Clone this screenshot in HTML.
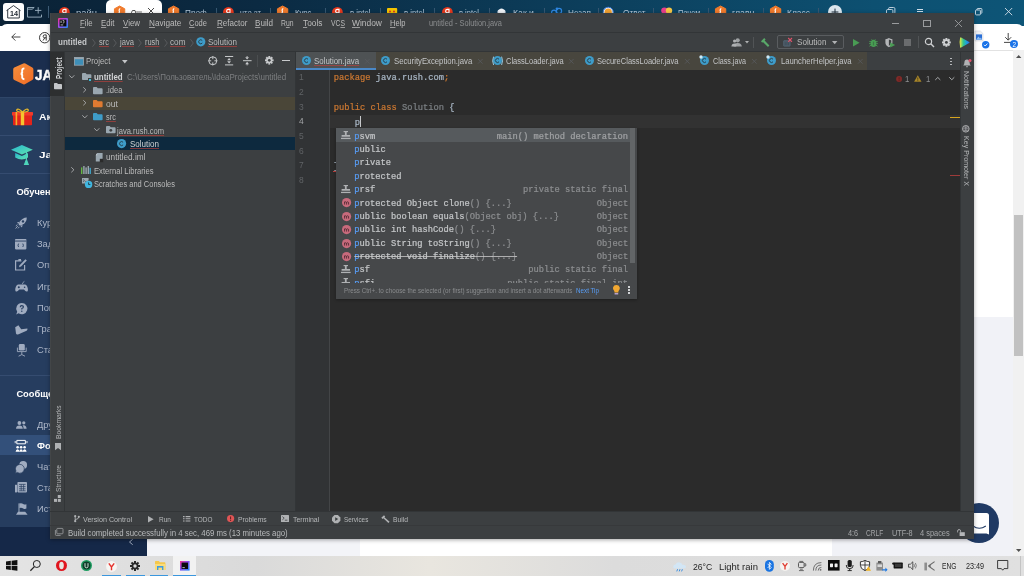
<!DOCTYPE html>
<html>
<head>
<meta charset="utf-8">
<title>untitled - Solution.java</title>
<style>
*{box-sizing:border-box;margin:0;padding:0}
html,body{width:1024px;height:576px;overflow:hidden;background:#fff}
body{position:relative;font-family:"Liberation Sans",sans-serif;font-size:9px;color:#bbb}
#root{position:absolute;left:0;top:0;width:1024px;height:576px;overflow:hidden;will-change:transform}
.abs{position:absolute}
.t{position:absolute;white-space:pre;line-height:1;transform-origin:0 50%;color:#bbbbbb}
.t u{text-decoration-thickness:.5px;text-underline-offset:.8px;text-decoration-color:rgba(187,187,187,.75)}
.m{font-family:"Liberation Mono",monospace;-webkit-text-stroke:.22px}
.s{font-family:"Liberation Serif",serif}
svg{position:absolute;overflow:visible}
.sq{text-decoration:underline;text-decoration-color:rgba(188,63,60,.65);text-decoration-thickness:0.6px;text-underline-offset:1.2px}
#bbar{left:0;top:0;width:1024px;height:26px;background:linear-gradient(100deg,#0b2236 0%,#0b2a42 25%,#0c3d5a 55%,#0d5071 85%,#0d5577 100%)}
#btool{left:0;top:24.4px;width:1024px;height:26.2px;background:#fff;border-radius:7px 7px 0 0}
#side{left:0;top:50.6px;width:226px;height:476.4px;background:#263d5f}
#sidetop{left:0;top:50.6px;width:226px;height:46.8px;background:#1b2e4e}
#sidebot{left:0;top:527px;width:147px;height:29px;background:#152848}
#pagel{left:147px;top:527px;width:213px;height:29px;background:#f3f4f8}
#pager{left:832.4px;top:317px;width:180.6px;height:239px;background:#f1f2f7}
#scroll{left:1013px;top:50px;width:11px;height:506px;background:#f1f1f1}
#thumb{left:1014px;top:215px;width:9px;height:141px;background:#c1c1c1}
#task{left:0;top:556px;width:1024px;height:20px;background:linear-gradient(90deg,#e4e4e4 0%,#dadada 25%,#e9e6df 42%,#dcdcdc 60%,#e0e0e0 100%)}
#ide{left:50px;top:13.4px;width:923.7px;height:525.4px;background:#3c3f41;box-shadow:0 1px 4px rgba(0,0,0,.35)}
</style>
</head>
<body>
<div id="root">
<div id="bbar" class="abs"></div>
<div id="btool" class="abs"></div>
<div id="side" class="abs"></div>
<div id="sidetop" class="abs"></div>
<div id="sidebot" class="abs"></div>
<div id="pagel" class="abs"></div>
<div id="pager" class="abs"></div>
<div id="scroll" class="abs"></div>
<div id="thumb" class="abs"></div>
<div id="task" class="abs"></div>
<!-- browser -->
<div class="abs" style="left:2.8px;top:2.8px;width:21.2px;height:18.4px;background:#fdfdfd;border-radius:3px"></div>
<svg style="left:6px;top:4.6px" width="15" height="13.6" viewBox="0 0 15 13.6" preserveAspectRatio="none"><path d="M.5 5.6L7.5 .6L14.5 5.6M1.7 4.9V13H13.3V4.9" stroke="#1d2630" stroke-width=".9" fill="none" stroke-linejoin="round"/></svg>
<span class="t" style="left:9.60px;top:10.00px;font-size:8px;color:#1d2630;font-weight:bold;transform:scaleX(0.899);">14</span>
<svg style="left:27px;top:7px" width="15" height="10.6" viewBox="0 0 15 10.6" preserveAspectRatio="none"><path d="M7.2 .5H.5V10.1H14.5V7.6" stroke="#9db2c3" stroke-width=".9" fill="none"/><path d="M11.2 .2V6.6M8 3.4H14.4" stroke="#9db2c3" stroke-width=".9"/><path d="M.5 2.2H5.2L7.2 .5" stroke="#9db2c3" stroke-width=".9" fill="none"/></svg>
<div class="abs" style="left:47.5px;top:6.2px;width:0.9px;height:11.4px;background:#3e5c76;"></div>
<div class="abs" style="left:106.3px;top:0px;width:55.9px;height:24px;background:#fff;border-radius:5px 5px 0 0"></div>
<div class="abs" style="left:215.7px;top:8px;width:0.8px;height:12px;background:#365670;"></div>
<div class="abs" style="left:270.2px;top:8px;width:0.8px;height:12px;background:#365670;"></div>
<div class="abs" style="left:324.7px;top:8px;width:0.8px;height:12px;background:#365670;"></div>
<div class="abs" style="left:379.7px;top:8px;width:0.8px;height:12px;background:#365670;"></div>
<div class="abs" style="left:434.2px;top:8px;width:0.8px;height:12px;background:#365670;"></div>
<div class="abs" style="left:489px;top:8px;width:0.8px;height:12px;background:#365670;"></div>
<div class="abs" style="left:543.5px;top:8px;width:0.8px;height:12px;background:#365670;"></div>
<div class="abs" style="left:598px;top:8px;width:0.8px;height:12px;background:#365670;"></div>
<div class="abs" style="left:653.2px;top:8px;width:0.8px;height:12px;background:#365670;"></div>
<div class="abs" style="left:708.2px;top:8px;width:0.8px;height:12px;background:#365670;"></div>
<div class="abs" style="left:762.8px;top:8px;width:0.8px;height:12px;background:#365670;"></div>
<div class="abs" style="left:817.5px;top:8px;width:0.8px;height:12px;background:#365670;"></div>
<svg style="left:59.00000000000001px;top:6.6px" width="10.8" height="10.8" viewBox="0 0 10.8 10.8" preserveAspectRatio="none"><circle cx="5.4" cy="5.4" r="5.4" fill="#e8391d"/><path d="M7.0 8.8V2.4000000000000004H5.4Q3.6000000000000005 2.4000000000000004 3.6000000000000005 4.2Q3.6000000000000005 5.800000000000001 5.800000000000001 5.800000000000001H7.0M5.6000000000000005 5.800000000000001L3.6000000000000005 8.8" stroke="#fff" stroke-width="1.1" fill="none"/></svg>
<span class="t" style="left:75.80px;top:8.00px;font-size:9.4px;color:#b4c6d6;transform:scaleX(1.010);">райн</span>
<svg style="left:113.9px;top:6.4px" width="11.2" height="11.2" viewBox="0 0 11.2 11.2" preserveAspectRatio="none"><path d="M5.6 0L10.751999999999999 2.8V8.399999999999999L5.6 11.2L0.4479999999999995 8.399999999999999V2.8Z" fill="#f07a2c" stroke="#f07a2c" stroke-width="1" stroke-linejoin="round"/><path d="M6.199999999999999 2.3999999999999995Q4.3999999999999995 3.8 5.5 5.6Q4.3999999999999995 7.3999999999999995 6.199999999999999 8.8" stroke="#fff" stroke-width="1.1" fill="none"/></svg>
<span class="t" style="left:131.30px;top:8.00px;font-size:9.4px;color:#222;transform:scaleX(0.734);">Ош</span>
<svg style="left:147.8px;top:8.4px" width="6" height="6" viewBox="0 0 6 6" preserveAspectRatio="none"><path d="M0 0L6 6M6 0L0 6" stroke="#333" stroke-width=".9"/></svg>
<svg style="left:168.3px;top:6.4px" width="11.2" height="11.2" viewBox="0 0 11.2 11.2" preserveAspectRatio="none"><path d="M5.6 0L10.751999999999999 2.8V8.399999999999999L5.6 11.2L0.4479999999999995 8.399999999999999V2.8Z" fill="#f07a2c" stroke="#f07a2c" stroke-width="1" stroke-linejoin="round"/><path d="M6.199999999999999 2.3999999999999995Q4.3999999999999995 3.8 5.5 5.6Q4.3999999999999995 7.3999999999999995 6.199999999999999 8.8" stroke="#fff" stroke-width="1.1" fill="none"/></svg>
<span class="t" style="left:185.20px;top:8.00px;font-size:9.4px;color:#b4c6d6;transform:scaleX(0.874);">Проф</span>
<svg style="left:223.1px;top:6.6px" width="10.8" height="10.8" viewBox="0 0 10.8 10.8" preserveAspectRatio="none"><circle cx="5.4" cy="5.4" r="5.4" fill="#e8391d"/><path d="M7.0 8.8V2.4000000000000004H5.4Q3.6000000000000005 2.4000000000000004 3.6000000000000005 4.2Q3.6000000000000005 5.800000000000001 5.800000000000001 5.800000000000001H7.0M5.6000000000000005 5.800000000000001L3.6000000000000005 8.8" stroke="#fff" stroke-width="1.1" fill="none"/></svg>
<span class="t" style="left:240.00px;top:8.00px;font-size:9.4px;color:#b4c6d6;transform:scaleX(0.813);">что эт</span>
<svg style="left:277.4px;top:6.4px" width="11.2" height="11.2" viewBox="0 0 11.2 11.2" preserveAspectRatio="none"><path d="M5.6 0L10.751999999999999 2.8V8.399999999999999L5.6 11.2L0.4479999999999995 8.399999999999999V2.8Z" fill="#f07a2c" stroke="#f07a2c" stroke-width="1" stroke-linejoin="round"/><path d="M6.199999999999999 2.3999999999999995Q4.3999999999999995 3.8 5.5 5.6Q4.3999999999999995 7.3999999999999995 6.199999999999999 8.8" stroke="#fff" stroke-width="1.1" fill="none"/></svg>
<span class="t" style="left:294.50px;top:8.00px;font-size:9.4px;color:#b4c6d6;transform:scaleX(0.825);">Курс</span>
<svg style="left:332.1px;top:6.6px" width="10.8" height="10.8" viewBox="0 0 10.8 10.8" preserveAspectRatio="none"><circle cx="5.4" cy="5.4" r="5.4" fill="#e8391d"/><path d="M7.0 8.8V2.4000000000000004H5.4Q3.6000000000000005 2.4000000000000004 3.6000000000000005 4.2Q3.6000000000000005 5.800000000000001 5.800000000000001 5.800000000000001H7.0M5.6000000000000005 5.800000000000001L3.6000000000000005 8.8" stroke="#fff" stroke-width="1.1" fill="none"/></svg>
<span class="t" style="left:349.50px;top:8.00px;font-size:9.4px;color:#b4c6d6;transform:scaleX(0.825);">в intel</span>
<svg style="left:387.2px;top:8.2px" width="10.2" height="8" viewBox="0 0 10.2 8" preserveAspectRatio="none"><rect width="10.2" height="8" rx="1" fill="#f4c400"/><circle cx="3" cy="3.4" r="1" fill="#d8322a"/><circle cx="7" cy="3.4" r="1" fill="#d8322a"/></svg>
<span class="t" style="left:403.50px;top:8.00px;font-size:9.4px;color:#b4c6d6;transform:scaleX(0.825);">в intel</span>
<svg style="left:441.90000000000003px;top:6.6px" width="10.8" height="10.8" viewBox="0 0 10.8 10.8" preserveAspectRatio="none"><circle cx="5.4" cy="5.4" r="5.4" fill="#e8391d"/><path d="M7.0 8.8V2.4000000000000004H5.4Q3.6000000000000005 2.4000000000000004 3.6000000000000005 4.2Q3.6000000000000005 5.800000000000001 5.800000000000001 5.800000000000001H7.0M5.6000000000000005 5.800000000000001L3.6000000000000005 8.8" stroke="#fff" stroke-width="1.1" fill="none"/></svg>
<span class="t" style="left:458.50px;top:8.00px;font-size:9.4px;color:#b4c6d6;transform:scaleX(0.805);">в intel</span>
<svg style="left:497.2px;top:8px" width="9" height="9" viewBox="0 0 9 9" preserveAspectRatio="none"><rect x=".5" y="1.5" width="8" height="7" rx="2" fill="#dfe6ee"/><circle cx="4.5" cy="3" r="2.6" fill="#eef2f6"/></svg>
<span class="t" style="left:513.00px;top:8.00px;font-size:9.4px;color:#b4c6d6;transform:scaleX(0.926);">Как и</span>
<svg style="left:551px;top:7.4px" width="11" height="9" viewBox="0 0 11 9" preserveAspectRatio="none"><circle cx="3" cy="5.6" r="2.4" stroke="#2e86e0" stroke-width="1.2" fill="none"/><circle cx="8" cy="4" r="2.6" stroke="#2e86e0" stroke-width="1.2" fill="none"/><circle cx="6" cy="1.8" r="1.4" fill="#2e86e0"/></svg>
<span class="t" style="left:568.00px;top:8.00px;font-size:9.4px;color:#b4c6d6;transform:scaleX(0.870);">Незап</span>
<svg style="left:603.3px;top:6.8px" width="10.4" height="10.4" viewBox="0 0 10.4 10.4" preserveAspectRatio="none"><circle cx="5.2" cy="5.2" r="5.2" fill="#f4f6f8"/><circle cx="5.2" cy="5.2" r="3.6" fill="#f0a030"/><circle cx="5.2" cy="5.2" r="5" stroke="#2e6fd0" stroke-width="1" fill="none"/></svg>
<span class="t" style="left:622.50px;top:8.00px;font-size:9.4px;color:#b4c6d6;transform:scaleX(0.875);">Ответ</span>
<svg style="left:660.6px;top:6.6px" width="11.6" height="9" viewBox="0 0 11.6 9" preserveAspectRatio="none"><circle cx="3.4" cy="3.6" r="3.2" fill="#e83e8c"/><circle cx="8" cy="3.6" r="3.2" fill="#f6c544"/></svg>
<span class="t" style="left:677.50px;top:8.00px;font-size:9.4px;color:#b4c6d6;transform:scaleX(0.793);">Почем</span>
<svg style="left:715.1999999999999px;top:6.4px" width="11.2" height="11.2" viewBox="0 0 11.2 11.2" preserveAspectRatio="none"><path d="M5.6 0L10.751999999999999 2.8V8.399999999999999L5.6 11.2L0.4479999999999995 8.399999999999999V2.8Z" fill="#f07a2c" stroke="#f07a2c" stroke-width="1" stroke-linejoin="round"/><path d="M6.199999999999999 2.3999999999999995Q4.3999999999999995 3.8 5.5 5.6Q4.3999999999999995 7.3999999999999995 6.199999999999999 8.8" stroke="#fff" stroke-width="1.1" fill="none"/></svg>
<span class="t" style="left:731.50px;top:8.00px;font-size:9.4px;color:#b4c6d6;transform:scaleX(0.933);">главн</span>
<svg style="left:770.1999999999999px;top:6.4px" width="11.2" height="11.2" viewBox="0 0 11.2 11.2" preserveAspectRatio="none"><path d="M5.6 0L10.751999999999999 2.8V8.399999999999999L5.6 11.2L0.4479999999999995 8.399999999999999V2.8Z" fill="#f07a2c" stroke="#f07a2c" stroke-width="1" stroke-linejoin="round"/><path d="M6.199999999999999 2.3999999999999995Q4.3999999999999995 3.8 5.5 5.6Q4.3999999999999995 7.3999999999999995 6.199999999999999 8.8" stroke="#fff" stroke-width="1.1" fill="none"/></svg>
<span class="t" style="left:786.50px;top:8.00px;font-size:9.4px;color:#b4c6d6;transform:scaleX(0.899);">Класс</span>
<svg style="left:828.3px;top:4.6px" width="14" height="14" viewBox="0 0 14 14" preserveAspectRatio="none"><circle cx="7" cy="7" r="7" fill="#dbe6ee"/><path d="M7 3.6V10.4M3.6 7H10.4" stroke="#1d2c3a" stroke-width="1"/></svg>
<svg style="left:886px;top:7px" width="9.4" height="9" viewBox="0 0 9.4 9" preserveAspectRatio="none"><rect x=".5" y="2.5" width="6.4" height="6" rx="1.2" stroke="#cfdde8" stroke-width=".9" fill="none"/><path d="M2.6 2.4V1.6Q2.6 .5 3.8 .5H7.6Q8.9 .5 8.9 1.7V5.4Q8.9 6.6 7.6 6.6" stroke="#cfdde8" stroke-width=".9" fill="none"/></svg>
<div class="abs" style="left:916.8px;top:9px;width:6.4px;height:0.9px;background:#cfdde8;"></div>
<div class="abs" style="left:916.8px;top:11.4px;width:6.4px;height:0.9px;background:#cfdde8;"></div>
<svg style="left:975.4px;top:8px" width="7.4" height="7.4" viewBox="0 0 7.4 7.4" preserveAspectRatio="none"><rect x=".5" y="2" width="4.9" height="4.9" rx=".8" stroke="#d4e0ea" stroke-width=".9" fill="none"/><path d="M2 2V1.2Q2 .5 2.8 .5H6.2Q6.9 .5 6.9 1.2V4.6Q6.9 5.4 6.2 5.4" stroke="#d4e0ea" stroke-width=".9" fill="none"/></svg>
<svg style="left:1004.8px;top:8.4px" width="7.2" height="7.2" viewBox="0 0 7.2 7.2" preserveAspectRatio="none"><path d="M0 0L7.2 7.2M7.2 0L0 7.2" stroke="#d4e0ea" stroke-width=".9"/></svg>
<svg style="left:11px;top:33.4px" width="9.4" height="8" viewBox="0 0 9.4 8" preserveAspectRatio="none"><path d="M9.4 4H.8M4.4 .4L.8 4L4.4 7.6" stroke="#333" stroke-width=".9" fill="none"/></svg>
<svg style="left:39.3px;top:31.8px" width="11.4" height="11.4" viewBox="0 0 11.4 11.4" preserveAspectRatio="none"><circle cx="5.7" cy="5.7" r="5.7" fill="#fff"/><circle cx="5.7" cy="5.7" r="5.2" stroke="#222" stroke-width=".9" fill="none"/><path d="M7.2 8.6V2.9H5.6Q4.2 2.9 4.2 4.4Q4.2 5.8 5.8 5.8H7.2M5.8 5.8L4 8.6" stroke="#222" stroke-width=".9" fill="none"/></svg>
<svg style="left:975.4px;top:31px" width="8" height="10" viewBox="0 0 8 10" preserveAspectRatio="none"><path d="M0 0H5.4L8 2.6V10H0Z" fill="#eef0f3" stroke="#c9ced6" stroke-width=".5"/><rect x="1" y="3.4" width="6" height="5.4" fill="#2a6fd6"/><path d="M1 8.8L3.4 5.6L5 7.4L6 6.4L7 8.8Z" fill="#8fc0f5"/></svg>
<svg style="left:981.5999999999999px;top:40.5px" width="7.4" height="7.4" viewBox="0 0 7.4 7.4" preserveAspectRatio="none"><circle cx="3.7" cy="3.7" r="3.7" fill="#1a73e8"/><path d="M2 3.8L3.2 5L5.4 2.6" stroke="#fff" stroke-width=".9" fill="none"/></svg>
<svg style="left:1003.8px;top:32.6px" width="8.4" height="10" viewBox="0 0 8.4 10" preserveAspectRatio="none"><path d="M4.2 0V7M1.2 4.2L4.2 7.2L7.2 4.2M0 9.4H8.4" stroke="#333" stroke-width=".9" fill="none"/></svg>
<svg style="left:1010.3px;top:40.2px" width="8" height="8" viewBox="0 0 8 8" preserveAspectRatio="none"><circle cx="4" cy="4" r="4" fill="#1a73e8"/></svg>
<span class="t" style="left:1012.60px;top:42.00px;font-size:6.4px;color:#fff;">2</span>
<div class="abs" style="left:974px;top:50.2px;width:39px;height:1.2px;background:#e2e2e2;"></div>
<svg style="left:1015.8px;top:55.4px" width="5.4" height="3" viewBox="0 0 5.4 3" preserveAspectRatio="none"><path d="M0 3L2.7 0L5.4 3Z" fill="#505050"/></svg>
<svg style="left:1015.6px;top:548.6px" width="5.4" height="3" viewBox="0 0 5.4 3" preserveAspectRatio="none"><path d="M0 0L2.7 3L5.4 0Z" fill="#505050"/></svg>
<svg style="left:959.4px;top:502.70000000000005px" width="40" height="40" viewBox="0 0 40 40" preserveAspectRatio="none"><circle cx="20" cy="20" r="20" fill="#203a64"/></svg>
<svg style="left:968.4px;top:512.7px" width="21" height="22" viewBox="0 0 21 22" preserveAspectRatio="none"><path d="M2 0H18.5Q21 0 21 2.5V21.6L18.4 20.5H2Q0 20.5 0 18.5V2Q0 0 2 0Z" fill="#fff"/><path d="M5 13Q11.3 17.6 17.8 13" stroke="#203a64" stroke-width="1.1" fill="none"/></svg>
<!-- sidebar -->
<div class="abs" style="left:0px;top:97.4px;width:50px;height:0.9px;background:#2f4668;"></div>
<div class="abs" style="left:0px;top:135px;width:50px;height:0.9px;background:#354c70;"></div>
<div class="abs" style="left:0px;top:172.8px;width:50px;height:0.9px;background:#354c70;"></div>
<div class="abs" style="left:0px;top:374.8px;width:50px;height:0.9px;background:#354c70;"></div>
<div class="abs" style="left:0px;top:435.2px;width:50px;height:20.2px;background:#33507a;"></div>
<svg style="left:12.6px;top:63.2px" width="20.6" height="21.6" viewBox="0 0 20.6 21.6" preserveAspectRatio="none"><defs><linearGradient id="lgo" x1="0" y1="0" x2="1" y2="1"><stop offset="0" stop-color="#f8913c"/><stop offset="1" stop-color="#ee6a26"/></linearGradient></defs><path d="M10.3 .4Q11.3 -.1 12.3 .5L19.3 4.6Q20.4 5.2 20.4 6.4V15.2Q20.4 16.4 19.3 17L12.3 21.1Q11.3 21.7 10.3 21.2L1.3 17Q.2 16.4 .2 15.2V6.4Q.2 5.2 1.3 4.6Z" fill="url(#lgo)"/><path d="M11.4 5.4Q8.8 5.6 9.2 8.2Q9.6 10.4 7.8 10.8Q9.6 11.2 9.2 13.4Q8.8 16 11.4 16.2" stroke="#fff" stroke-width="1.9" fill="none"/></svg>
<span class="t" style="left:34.60px;top:67.00px;font-size:15.5px;color:#fff;font-weight:bold;transform:scaleX(0.858);-webkit-text-stroke:.5px #fff;">JA</span>
<svg style="left:11.8px;top:108.3px" width="21" height="17.6" viewBox="0 0 21 17.6" preserveAspectRatio="none"><rect x="1" y="5.6" width="19" height="11.6" rx=".8" fill="#e3241b"/><rect x="0" y="4" width="21" height="3.6" rx=".6" fill="#f03a2a"/><rect x="8.8" y="4" width="3.4" height="13.2" fill="#f6c52f"/><rect x="3.6" y="4" width="1.6" height="13.2" fill="#f6c52f" opacity=".85"/><path d="M10.5 4Q6 -.5 4.6 2Q4.2 3.8 10.5 4ZM10.5 4Q15 -.5 16.4 2Q16.8 3.8 10.5 4Z" fill="none" stroke="#e9b82a" stroke-width="1.1"/></svg>
<span class="t" style="left:39.30px;top:112.00px;font-size:9.8px;color:#fff;font-weight:bold;transform:scaleX(1.060);">Ак</span>
<svg style="left:10.8px;top:144.6px" width="21.8" height="19.6" viewBox="0 0 21.8 19.6" preserveAspectRatio="none"><defs><linearGradient id="lgc" x1="0" y1="0" x2="1" y2="1"><stop offset="0" stop-color="#27b9cf"/><stop offset="1" stop-color="#62e3ae"/></linearGradient></defs><path d="M10.9 0L21.8 4.8L10.9 9.6L0 4.8Z" fill="url(#lgc)"/><path d="M4.2 8V12.4Q10.9 16.4 17 12.4V8L10.9 10.9Z" fill="url(#lgc)"/><path d="M15.4 6.4V14M13.6 19.4L15.4 14.6L17.2 19.4Z" stroke="#4fd6bb" stroke-width="1.2" fill="#4fd6bb"/></svg>
<span class="t" style="left:38.90px;top:150.00px;font-size:9.8px;color:#fff;font-weight:bold;transform:scaleX(1.202);">Ja</span>
<span class="t" style="left:16.40px;top:188.00px;font-size:9.3px;color:#fff;font-weight:bold;">Обучение</span>
<span class="t" style="left:37.00px;top:219.00px;font-size:9.3px;color:#adb7c9;">Курсы</span>
<span class="t" style="left:37.00px;top:240.00px;font-size:9.3px;color:#adb7c9;">Задачи</span>
<span class="t" style="left:37.00px;top:261.00px;font-size:9.3px;color:#adb7c9;">Опросы</span>
<span class="t" style="left:37.00px;top:283.00px;font-size:9.3px;color:#adb7c9;">Игры</span>
<span class="t" style="left:37.00px;top:304.00px;font-size:9.3px;color:#adb7c9;">Помощь</span>
<span class="t" style="left:37.00px;top:325.00px;font-size:9.3px;color:#adb7c9;">График</span>
<span class="t" style="left:37.00px;top:346.00px;font-size:9.3px;color:#adb7c9;">Стажировка</span>
<svg style="left:15.2px;top:216.7px" width="12.2" height="12.2" viewBox="0 0 12.2 12.2" preserveAspectRatio="none"><path d="M11.8 .4Q7.4 .6 4.8 4.6L3.6 7.4L5 8.8L7.8 7.6Q11.8 5 11.8 .4Z" fill="#a0acc0"/><circle cx="8" cy="4.4" r="1.2" fill="#263d5f"/><path d="M3 8.8L.6 11.6M4.4 9.8L3 11.4M2.4 7.6L.8 9" stroke="#a0acc0" stroke-width=".9"/><path d="M4.6 4.8L2 5.4L3.4 7M7.6 7.8L7 10.4L5.4 9" fill="#a0acc0"/></svg>
<svg style="left:15.2px;top:238.5px" width="11.4" height="10.4" viewBox="0 0 11.4 10.4" preserveAspectRatio="none"><rect width="11.4" height="10.4" rx=".8" fill="#a0acc0"/><rect x="0" y="1.6" width="11.4" height=".9" fill="#263d5f"/><path d="M3.6 4.6Q2.4 6.3 3.6 8M7.8 4.6Q9 6.3 7.8 8" stroke="#263d5f" stroke-width=".9" fill="none"/></svg>
<svg style="left:15.2px;top:259.2px" width="12" height="11.6" viewBox="0 0 12 11.6" preserveAspectRatio="none"><path d="M6.4 1.8H.6V11H9.6V6" stroke="#a0acc0" stroke-width="1.2" fill="none"/><path d="M10.4 .2L11.8 1.6L6 7.6L4 8.2L4.6 6.2Z" fill="#a0acc0"/><rect x="3.4" y="0" width="2.6" height="1.8" fill="#a0acc0"/></svg>
<svg style="left:14.6px;top:281.2px" width="13.2" height="10.6" viewBox="0 0 13.2 10.6" preserveAspectRatio="none"><path d="M3.4 3.4H9.8Q12 3.4 12.8 7.2Q13.4 10.6 11.6 10.6Q10.4 10.6 9 8.6H4.2Q2.8 10.6 1.6 10.6Q-.2 10.6 .4 7.2Q1.2 3.4 3.4 3.4Z" fill="#a0acc0"/><path d="M7.4 3.2Q7.4 1.4 9.4 .4" stroke="#a0acc0" stroke-width=".8" fill="none"/><circle cx="3.8" cy="6.2" r="1" fill="#263d5f"/><circle cx="9.6" cy="6.2" r=".8" fill="#263d5f"/></svg>
<svg style="left:15.6px;top:302.6px" width="11.6" height="11.6" viewBox="0 0 11.6 11.6" preserveAspectRatio="none"><path d="M5.8 0A5.6 5.6 0 1 1 2.6 10.2L.2 11.4L1.2 8.8A5.6 5.6 0 0 1 5.8 0Z" fill="#a0acc0"/><path d="M4.2 4.2Q4.2 2.6 5.8 2.6Q7.4 2.6 7.4 4Q7.4 5 5.8 5.6V6.6" stroke="#263d5f" stroke-width="1.1" fill="none"/><circle cx="5.8" cy="8.2" r=".7" fill="#263d5f"/></svg>
<svg style="left:14.8px;top:324.6px" width="12.8" height="9.6" viewBox="0 0 12.8 9.6" preserveAspectRatio="none"><path d="M.2 2.2L3.4 .2L6.2 4.2L12.4 3.6Q12.8 5 11.6 5.8L3 9.4Q1.4 9.8 1 8.4Z" fill="#a0acc0"/></svg>
<svg style="left:16.6px;top:344.4px" width="9.6" height="12.6" viewBox="0 0 9.6 12.6" preserveAspectRatio="none"><rect x="1.8" y="0" width="6" height="6.6" rx="1.4" fill="#a0acc0"/><path d="M.4 3.6V7.6H9.2V3.6" stroke="#a0acc0" stroke-width=".9" fill="none"/><path d="M4.8 7.8V10.6M1.6 12.2L4.8 10.6L8 12.2" stroke="#a0acc0" stroke-width=".9" fill="none"/></svg>
<span class="t" style="left:16.40px;top:390.00px;font-size:9.3px;color:#fff;font-weight:bold;">Сообщество</span>
<span class="t" style="left:37.00px;top:421.00px;font-size:9.3px;color:#adb7c9;">Друзья</span>
<span class="t" style="left:37.00px;top:442.00px;font-size:9.3px;color:#fff;font-weight:bold;">Форум</span>
<span class="t" style="left:37.00px;top:463.00px;font-size:9.3px;color:#adb7c9;">Чат</span>
<span class="t" style="left:37.00px;top:484.00px;font-size:9.3px;color:#adb7c9;">Статьи</span>
<span class="t" style="left:37.00px;top:505.00px;font-size:9.3px;color:#adb7c9;">Истории</span>
<svg style="left:16px;top:420.5px" width="10.6" height="7.8" viewBox="0 0 10.6 7.8" preserveAspectRatio="none"><circle cx="3.4" cy="2" r="1.9" fill="#a0acc0"/><path d="M0 7.8Q.2 4.6 3.4 4.6Q6.6 4.6 6.8 7.8Z" fill="#a0acc0"/><circle cx="7.8" cy="1.8" r="1.6" fill="#a0acc0"/><path d="M7 4.2Q10.4 3.8 10.6 7.8H7.6Q7.6 5.6 6.6 4.6Z" fill="#a0acc0"/></svg>
<svg style="left:15.3px;top:439.5px" width="12.2" height="12" viewBox="0 0 12.2 12" preserveAspectRatio="none"><path d="M1.8 .4H10.4V3.8H1.8Z" stroke="#fff" stroke-width="1" fill="none"/><path d="M.2 1V3.2M12 1V3.2" stroke="#fff" stroke-width=".9"/><circle cx="2.6" cy="7.2" r="1.3" fill="#fff"/><circle cx="6.1" cy="7.2" r="1.3" fill="#fff"/><circle cx="9.6" cy="7.2" r="1.3" fill="#fff"/><path d="M.6 11.8Q.8 9.2 2.6 9.2Q4.3 9.2 4.4 11.8ZM4.3 11.8Q4.4 9.2 6.1 9.2Q7.8 9.2 7.9 11.8ZM7.8 11.8Q7.9 9.2 9.6 9.2Q11.4 9.2 11.6 11.8Z" fill="#fff"/></svg>
<svg style="left:15.2px;top:460.5px" width="12.4" height="12.4" viewBox="0 0 12.4 12.4" preserveAspectRatio="none"><circle cx="8.2" cy="4" r="3.9" fill="#a0acc0"/><path d="M4.6 3.4A4.4 4.4 0 1 1 2.4 11.4L.2 12.2L1 10A4.4 4.4 0 0 1 4.6 3.4Z" fill="#a0acc0" stroke="#263d5f" stroke-width=".7"/></svg>
<svg style="left:15.4px;top:482.4px" width="12" height="10.4" viewBox="0 0 12 10.4" preserveAspectRatio="none"><rect x="2.4" y="0" width="9.6" height="10.4" rx=".8" fill="#a0acc0"/><rect x="0" y="2.8" width="2" height="7.6" fill="#a0acc0"/><path d="M4 2.4H10.6M4 4.6H10.6M4 6.8H10.6M4 8.8H10.6M6.2 2.4V8.8M8.6 2.4V8.8" stroke="#263d5f" stroke-width=".7"/></svg>
<svg style="left:15.6px;top:503.4px" width="11.6" height="12" viewBox="0 0 11.6 12" preserveAspectRatio="none"><path d="M3 .4V9" stroke="#a0acc0" stroke-width="1"/><path d="M3.4 .6Q5.4 -.2 7.2 1Q8.8 2 10.4 1.2V5.6Q8.8 6.4 7.2 5.4Q5.4 4.2 3.4 5Z" fill="#a0acc0"/><path d="M0 11.8L2 8.8H9.2L11.6 11.8Z" fill="#a0acc0"/></svg>
<svg style="left:129px;top:539px" width="4" height="6" viewBox="0 0 4 6" preserveAspectRatio="none"><path d="M3.7 .3L.5 3L3.7 5.7" stroke="#aab4c6" stroke-width=".9" fill="none"/></svg>
<!-- taskbar -->
<div class="abs" style="left:172.9px;top:556px;width:23.4px;height:20px;background:#f2f2f2;"></div>
<svg style="left:5.9px;top:560.4px" width="11.4" height="10.8" viewBox="0 0 11.4 10.8" preserveAspectRatio="none"><path d="M0 1.5L4.8 .8V5H0ZM5.6 .7L11.4 0V5H5.6ZM0 5.8H4.8V10L0 9.3ZM5.6 5.8H11.4V10.8L5.6 10.1Z" fill="#111"/></svg>
<svg style="left:30.4px;top:560.2px" width="11" height="11.2" viewBox="0 0 11 11.2" preserveAspectRatio="none"><circle cx="6.8" cy="4" r="3.5" stroke="#222" stroke-width="1" fill="none"/><path d="M4.4 6.6L.4 10.8" stroke="#222" stroke-width="1.2"/></svg>
<svg style="left:56.4px;top:560.4px" width="11" height="11" viewBox="0 0 11 11" preserveAspectRatio="none"><circle cx="5.5" cy="5.5" r="5.5" fill="#e0161f"/><ellipse cx="5.5" cy="5.5" rx="2.3" ry="3.7" fill="#e8e6e2"/></svg>
<svg style="left:81px;top:560.4px" width="11" height="11" viewBox="0 0 11 11" preserveAspectRatio="none"><circle cx="5.5" cy="5.5" r="5.5" fill="#1f9e62"/><circle cx="5.5" cy="5.5" r="4" fill="#0e3f2a"/><path d="M4 3.2V6.4Q4 7.8 5.5 7.8Q7 7.8 7 6.4V3.2" stroke="#e8f4ec" stroke-width=".9" fill="none"/></svg>
<svg style="left:105.6px;top:560.6px" width="11" height="11" viewBox="0 0 11 11" preserveAspectRatio="none"><circle cx="5.5" cy="5.5" r="5.4" fill="#f7f5f2"/><path d="M2.8 2.4L5.5 6L8.2 2.4M5.5 6V9.2" stroke="#e5322d" stroke-width="1.4" fill="none"/></svg>
<svg style="left:130.2px;top:560.9px" width="10" height="10" viewBox="0 0 10 10" preserveAspectRatio="none"><g transform="translate(5,5)"><rect x="-1" y="-5" width="2" height="2.4" transform="rotate(0)" fill="#2a2a2a"/><rect x="-1" y="-5" width="2" height="2.4" transform="rotate(45)" fill="#2a2a2a"/><rect x="-1" y="-5" width="2" height="2.4" transform="rotate(90)" fill="#2a2a2a"/><rect x="-1" y="-5" width="2" height="2.4" transform="rotate(135)" fill="#2a2a2a"/><rect x="-1" y="-5" width="2" height="2.4" transform="rotate(180)" fill="#2a2a2a"/><rect x="-1" y="-5" width="2" height="2.4" transform="rotate(225)" fill="#2a2a2a"/><rect x="-1" y="-5" width="2" height="2.4" transform="rotate(270)" fill="#2a2a2a"/><rect x="-1" y="-5" width="2" height="2.4" transform="rotate(315)" fill="#2a2a2a"/><circle r="3.4" fill="#2a2a2a"/><circle r="1.7" fill="#dcdcdc"/></g></svg>
<svg style="left:155.3px;top:561.4px" width="10.4" height="9" viewBox="0 0 10.4 9" preserveAspectRatio="none"><path d="M0 .6Q0 0 .6 0H3.8L5 1.2H9.8Q10.4 1.2 10.4 1.8V9H0Z" fill="#f5c84c"/><rect x="0" y="3" width="10.4" height="6" fill="#f9dc7c"/><rect x="2" y="5" width="6.4" height="4" fill="#3f9be0"/><rect x="3.4" y="6.6" width="3.6" height="2.4" fill="#f9dc7c"/></svg>
<svg style="left:180px;top:561px" width="9.6" height="9.6" viewBox="0 0 9.6 9.6" preserveAspectRatio="none"><defs><linearGradient id="lg3" x1="0" y1="0" x2="1" y2="1"><stop offset="0" stop-color="#fc318c"/><stop offset=".45" stop-color="#8a4df0"/><stop offset="1" stop-color="#1f8bf5"/></linearGradient></defs><rect width="9.6" height="9.6" fill="url(#lg3)"/><rect x="1.6" y="1.6" width="6.4" height="6.4" fill="#0b0b0d"/><rect x="2.4" y="6.4" width="2.4" height=".7" fill="#fff"/></svg>
<div class="abs" style="left:102px;top:574.6px;width:18.700000000000003px;height:1.4px;background:#3a96dd;"></div>
<div class="abs" style="left:126px;top:574.6px;width:19px;height:1.4px;background:#3a96dd;"></div>
<div class="abs" style="left:150.4px;top:574.6px;width:17.599999999999994px;height:1.4px;background:#3a96dd;"></div>
<div class="abs" style="left:172.9px;top:574.6px;width:23.400000000000006px;height:1.4px;background:#3a96dd;"></div>
<svg style="left:672.8px;top:561.7px" width="13.2" height="9.6" viewBox="0 0 13.2 9.6" preserveAspectRatio="none"><path d="M3 6.6Q.2 6.6 .2 4.4Q.2 2.4 2.6 2.4Q3.4 .2 6 .2Q8.8 .2 9.4 2.8Q13 2.6 13 5Q13 6.6 10.6 6.6Z" fill="#d3e6f5"/><path d="M4.6 7.2L3.8 9.4M7 7.2L6.2 9.4M9.4 7.2L8.6 9.4" stroke="#3a8fe0" stroke-width="1"/></svg>
<span class="t" style="left:693.00px;top:562.00px;font-size:9.5px;color:#262626;transform:scaleX(0.909);">26°C</span>
<span class="t" style="left:718.80px;top:562.00px;font-size:9.5px;color:#262626;transform:scaleX(0.995);">Light rain</span>
<svg style="left:765.1px;top:559.9px" width="8.8" height="11.8" viewBox="0 0 8.8 11.8" preserveAspectRatio="none"><rect width="8.8" height="11.8" rx="4.2" fill="#1a74e2"/><path d="M2.6 3.8L6.2 7.6L4.4 9.4V2.4L6.2 4.2L2.6 8" stroke="#fff" stroke-width=".8" fill="none"/></svg>
<svg style="left:780.3px;top:561.4px" width="10" height="10" viewBox="0 0 10 10" preserveAspectRatio="none"><circle cx="5" cy="5" r="5" fill="#f6f4f1"/><path d="M2.6 2.2L5 5.4L7.4 2.2M5 5.4V8.4" stroke="#e03a2f" stroke-width="1.3" fill="none"/></svg>
<svg style="left:798px;top:561px" width="8.4" height="10" viewBox="0 0 8.4 10" preserveAspectRatio="none"><rect x=".5" y="1.4" width="5.6" height="5.2" rx="1" stroke="#4a4a4a" stroke-width=".9" fill="none"/><path d="M6.2 2.8H7.8V5H6.2M1.4 .4H5.2M2 8.2H4.8M1 9.6H5.8" stroke="#4a4a4a" stroke-width=".8" fill="none"/></svg>
<svg style="left:813.4px;top:561.6px" width="8.8" height="9" viewBox="0 0 8.8 9" preserveAspectRatio="none"><path d="M.4 8.6Q.4 .6 8.4 .6M2.8 8.6Q2.8 3 8.4 3M5.2 8.6Q5.2 5.4 8.4 5.4" stroke="#6e6e6e" stroke-width="1" fill="none"/><circle cx="7.6" cy="7.8" r=".9" fill="#6e6e6e"/></svg>
<svg style="left:827.8px;top:560.4px" width="11.6" height="10.6" viewBox="0 0 11.6 10.6" preserveAspectRatio="none"><rect width="11.6" height="10.6" fill="#0c0c0c"/><rect x="2" y="3.4" width="3" height="3.8" rx=".6" fill="#f0f0f0"/><rect x="6.6" y="3.4" width="3" height="3.8" rx=".6" fill="#f0f0f0"/></svg>
<svg style="left:845.8px;top:560.2px" width="7.4" height="11" viewBox="0 0 7.4 11" preserveAspectRatio="none"><rect x="1.6" y="0" width="4.2" height="7" rx="1.6" fill="#1a1a1a"/><path d="M.4 5V6Q.4 8.6 3.7 8.6Q7 8.6 7 6V5M3.7 8.6V10.4M1.6 10.6H5.8" stroke="#1a1a1a" stroke-width=".9" fill="none"/></svg>
<svg style="left:859.8px;top:560.4px" width="11" height="11" viewBox="0 0 11 11" preserveAspectRatio="none"><path d="M5 .4Q7.2 1.8 9.6 1.8V5.4Q9.6 8.8 5 10.6Q.4 8.8 .4 5.4V1.8Q2.8 1.8 5 .4Z" fill="#fafafa" stroke="#222" stroke-width=".9"/><path d="M5 .8V10.2M.6 5H9.4" stroke="#222" stroke-width=".8"/><path d="M8.4 6.2L11 10.8H5.8Z" fill="#f2b320"/></svg>
<svg style="left:875.6px;top:560.6px" width="11.6" height="10.6" viewBox="0 0 11.6 10.6" preserveAspectRatio="none"><rect x=".4" y="1.6" width="6.6" height="8" fill="#8c8c8c"/><rect x="2" y="0" width="3.4" height="2.2" fill="#5a5a5a"/><rect x="1.4" y="3.4" width="4.6" height="2.6" fill="#d8d8d8"/><path d="M6.2 8.2H9.4V6.6L11.6 8.8L9.4 11V9.6H6.2Z" fill="#1f78e0"/></svg>
<svg style="left:892.3px;top:562.4px" width="10.8" height="7" viewBox="0 0 10.8 7" preserveAspectRatio="none"><rect x="1.6" y=".6" width="9.2" height="5.8" rx=".6" fill="#141414"/><circle cx="1.4" cy="1.6" r="1.2" fill="#141414"/><rect x="3" y="1.8" width="6.4" height="3.2" fill="#3a3a3a"/></svg>
<svg style="left:908.2px;top:561.4px" width="9.8" height="9.4" viewBox="0 0 9.8 9.4" preserveAspectRatio="none"><path d="M.5 3.2H2.4L4.8 .8V8.6L2.4 6.2H.5Z" stroke="#333" stroke-width=".8" fill="none"/><path d="M6 3.2Q7 4.7 6 6.2M7.4 2Q9.2 4.7 7.4 7.4" stroke="#555" stroke-width=".7" fill="none"/></svg>
<svg style="left:924px;top:561.2px" width="11.6" height="9.8" viewBox="0 0 11.6 9.8" preserveAspectRatio="none"><rect x=".4" y="1.6" width="2.6" height="7.8" fill="#8e8e8e"/><path d="M4.4 5L10.6 .6M4.4 5L10.6 9.4M4.4 5H7" stroke="#6a6a6a" stroke-width="1.1" fill="none"/></svg>
<span class="t" style="left:942.10px;top:562.00px;font-size:8.6px;color:#262626;transform:scaleX(0.773);">ENG</span>
<span class="t" style="left:966.20px;top:562.00px;font-size:8.6px;color:#262626;transform:scaleX(0.841);">23:49</span>
<svg style="left:997px;top:559.9px" width="11.4" height="10.8" viewBox="0 0 11.4 10.8" preserveAspectRatio="none"><path d="M.6 .5H10.8V8.6H7L5.7 10.2L4.4 8.6H.6Z" stroke="#2a2a2a" stroke-width=".9" fill="none"/></svg>
<div class="abs" style="left:1019.8px;top:556px;width:0.7px;height:20px;background:#c4c4c4;"></div>
<div id="ide" class="abs"></div>
<!-- ide_top -->
<svg style="left:58px;top:18px" width="10" height="10" viewBox="0 0 10 10" preserveAspectRatio="none"><defs><linearGradient id="lg1" x1="0" y1="0" x2="1" y2="1"><stop offset="0" stop-color="#fc318c"/><stop offset=".45" stop-color="#a44df0"/><stop offset="1" stop-color="#1f8bf5"/></linearGradient></defs><rect width="10" height="10" rx="1" fill="url(#lg1)"/><rect x="1.6" y="1.6" width="6.8" height="6.8" fill="#0b0b0d"/><rect x="2.6" y="6.6" width="2.6" height=".7" fill="#fff"/><rect x="2.7" y="2.6" width=".7" height="2.4" fill="#fff"/><path d="M4.6 2.6h1.4v1.8q0 .6-.7.6h-.6" stroke="#fff" stroke-width=".6" fill="none"/></svg>
<span class="t" style="left:80.00px;top:19.00px;font-size:8.9px;transform:scaleX(0.872);"><u>F</u>ile</span>
<span class="t" style="left:101.00px;top:19.00px;font-size:8.9px;transform:scaleX(0.880);"><u>E</u>dit</span>
<span class="t" style="left:122.50px;top:19.00px;font-size:8.9px;transform:scaleX(0.889);"><u>V</u>iew</span>
<span class="t" style="left:149.00px;top:19.00px;font-size:8.9px;transform:scaleX(0.925);"><u>N</u>avigate</span>
<span class="t" style="left:189.00px;top:19.00px;font-size:8.9px;transform:scaleX(0.846);"><u>C</u>ode</span>
<span class="t" style="left:216.50px;top:19.00px;font-size:8.9px;transform:scaleX(0.907);"><u>R</u>efactor</span>
<span class="t" style="left:255.00px;top:19.00px;font-size:8.9px;transform:scaleX(0.910);"><u>B</u>uild</span>
<span class="t" style="left:281.00px;top:19.00px;font-size:8.9px;transform:scaleX(0.766);">R<u>u</u>n</span>
<span class="t" style="left:302.50px;top:19.00px;font-size:8.9px;transform:scaleX(0.939);"><u>T</u>ools</span>
<span class="t" style="left:330.50px;top:19.00px;font-size:8.9px;transform:scaleX(0.765);">VC<u>S</u></span>
<span class="t" style="left:352.00px;top:19.00px;font-size:8.9px;transform:scaleX(0.948);"><u>W</u>indow</span>
<span class="t" style="left:390.00px;top:19.00px;font-size:8.9px;transform:scaleX(0.847);"><u>H</u>elp</span>
<span class="t" style="left:428.50px;top:19.00px;font-size:8.9px;color:#8b8d8f;transform:scaleX(0.834);">untitled - Solution.java</span>
<div class="abs" style="left:891.7px;top:23px;width:7.4px;height:0.9px;background:#9a9c9e;"></div>
<div class="abs" style="left:923.4px;top:19.5px;width:7.2px;height:7.2px;background:transparent;border:1px solid #9a9c9e"></div>
<svg style="left:955px;top:19.5px" width="7" height="7" viewBox="0 0 7 7" preserveAspectRatio="none"><path d="M0 0L7 7M7 0L0 7" stroke="#9a9c9e" stroke-width=".9"/></svg>
<div class="abs" style="left:50px;top:32px;width:924px;height:1px;background:#323537;"></div>
<span class="t" style="left:58.00px;top:38.00px;font-size:8.9px;color:#c4c6c8;font-weight:bold;transform:scaleX(0.903);">untitled</span>
<span class="t" style="left:98.50px;top:38.00px;font-size:8.9px;transform:scaleX(0.843);"><span class="sq">src</span></span>
<span class="t" style="left:119.50px;top:38.00px;font-size:8.9px;transform:scaleX(0.857);"><span class="sq">java</span></span>
<span class="t" style="left:145.00px;top:38.00px;font-size:8.9px;transform:scaleX(0.838);"><span class="sq">rush</span></span>
<span class="t" style="left:170.00px;top:38.00px;font-size:8.9px;transform:scaleX(0.922);"><span class="sq">com</span></span>
<svg style="left:91.5px;top:38.5px" width="4" height="8" viewBox="0 0 4 8" preserveAspectRatio="none"><path d="M.5 .3L3.3 4L.5 7.7" stroke="#5e6163" stroke-width=".8" fill="none"/></svg>
<svg style="left:112.5px;top:38.5px" width="4" height="8" viewBox="0 0 4 8" preserveAspectRatio="none"><path d="M.5 .3L3.3 4L.5 7.7" stroke="#5e6163" stroke-width=".8" fill="none"/></svg>
<svg style="left:138px;top:38.5px" width="4" height="8" viewBox="0 0 4 8" preserveAspectRatio="none"><path d="M.5 .3L3.3 4L.5 7.7" stroke="#5e6163" stroke-width=".8" fill="none"/></svg>
<svg style="left:163.5px;top:38.5px" width="4" height="8" viewBox="0 0 4 8" preserveAspectRatio="none"><path d="M.5 .3L3.3 4L.5 7.7" stroke="#5e6163" stroke-width=".8" fill="none"/></svg>
<svg style="left:190px;top:38.5px" width="4" height="8" viewBox="0 0 4 8" preserveAspectRatio="none"><path d="M.5 .3L3.3 4L.5 7.7" stroke="#5e6163" stroke-width=".8" fill="none"/></svg>
<svg style="left:195.5px;top:37.2px" width="9.6" height="9.6" viewBox="0 0 9.6 9.6" preserveAspectRatio="none"><circle cx="4.8" cy="4.8" r="4.6" fill="#3e9cc9"/><path d="M6.3 3.6A2 2 0 1 0 6.3 6" stroke="#27424f" stroke-width="1" fill="none"/></svg>
<span class="t" style="left:208.00px;top:38.00px;font-size:8.9px;transform:scaleX(0.902);"><span class="sq">Solution</span></span>
<svg style="left:731px;top:37.5px" width="12" height="9" viewBox="0 0 12 9" preserveAspectRatio="none"><circle cx="6.7" cy="2.3" r="2.1" fill="#9fa2a4"/><path d="M2.6 8.6Q2.8 5 6.7 5Q10.6 5 10.8 8.6Z" fill="#9fa2a4"/><circle cx="3.6" cy="3" r="1.6" fill="#afb1b3"/><path d="M.4 8.6Q.6 5.6 3.6 5.6Q5 5.6 5.6 6.4L5.2 8.6Z" fill="#afb1b3"/></svg>
<svg style="left:744.5px;top:41.2px" width="4" height="2.4" viewBox="0 0 4 2.4" preserveAspectRatio="none"><path d="M0 0H4L2 2.4Z" fill="#afb1b3"/></svg>
<div class="abs" style="left:753.3px;top:36.5px;width:0.8px;height:11.5px;background:#515456;"></div>
<svg style="left:758.5px;top:36.5px" width="11" height="11" viewBox="0 0 11 11" preserveAspectRatio="none"><path d="M2 4.2L5.2 1L6.6 2.4L5.6 3.4L10.4 8.6L9 10L3.9 5.1L3.2 5.7Z" fill="#59a869"/></svg>
<div class="abs" style="left:777.2px;top:34.8px;width:66.6px;height:14.6px;background:transparent;border:1px solid #5a5d60;border-radius:2px"></div>
<svg style="left:783px;top:37.5px" width="9" height="9" viewBox="0 0 9 9" preserveAspectRatio="none"><rect x=".6" y="2.6" width="6.6" height="5.6" rx=".6" fill="#4b5a66" stroke="#5c7080" stroke-width=".5"/><path d="M2.3 4.2v3M3.9 4.2v3M5.5 4.2v3" stroke="#3c4a55" stroke-width=".6"/><path d="M5.2 0L9 3.8M9 0L5.2 3.8" stroke="#e0526a" stroke-width="1.1"/></svg>
<span class="t" style="left:796.50px;top:38.00px;font-size:8.9px;transform:scaleX(0.917);">Solution</span>
<svg style="left:831.5px;top:40.8px" width="5.4" height="3.2" viewBox="0 0 5.4 3.2" preserveAspectRatio="none"><path d="M0 0H5.4L2.7 3.2Z" fill="#afb1b3"/></svg>
<svg style="left:852.8px;top:38.6px" width="6.6" height="7.6" viewBox="0 0 6.6 7.6" preserveAspectRatio="none"><path d="M0 0L6.6 3.8L0 7.6Z" fill="#499c54"/></svg>
<svg style="left:868.5px;top:37.6px" width="9" height="9.6" viewBox="0 0 9 9.6" preserveAspectRatio="none"><ellipse cx="4.5" cy="5.4" rx="2.9" ry="3.6" fill="#499c54"/><path d="M2.6 1.3L3.6 2.6M6.4 1.3L5.4 2.6M.3 3.6H2M.1 5.6H1.8M.5 8.2L2 7.2M8.7 3.6H7M8.9 5.6H7.2M8.5 8.2L7 7.2" stroke="#499c54" stroke-width=".9"/><rect x="3.9" y="3.6" width="1.2" height="3.8" fill="#3c7a45"/></svg>
<svg style="left:885px;top:37.6px" width="10.4" height="9.6" viewBox="0 0 10.4 9.6" preserveAspectRatio="none"><path d="M.4 1.2Q2.6 1.2 3.9 .1Q5.2 1.2 7.4 1.2V4.6Q7.4 7.6 3.9 9.2Q.4 7.6 .4 4.6Z" fill="#b4b6b8"/><path d="M3.9 1.5Q5 2.2 6.3 2.3V4.6Q6.3 6.6 3.9 7.9Z" fill="#3c3f41"/><path d="M5.2 4.6L10.2 7.1L5.2 9.6Z" fill="#499c54"/></svg>
<div class="abs" style="left:904.3px;top:39px;width:6.8px;height:6.8px;background:#6a6c6e;"></div>
<div class="abs" style="left:918.2px;top:36.2px;width:0.8px;height:12px;background:#515456;"></div>
<svg style="left:924px;top:37px" width="11" height="11" viewBox="0 0 11 11" preserveAspectRatio="none"><circle cx="4.5" cy="4.5" r="3.1" stroke="#ced0d2" stroke-width="1.2" fill="none"/><path d="M6.8 6.8L10 10" stroke="#ced0d2" stroke-width="1.4"/></svg>
<svg style="left:942.2px;top:38.1px" width="8.8" height="8.8" viewBox="0 0 10 10" preserveAspectRatio="none"><g transform="translate(5,5)"><rect x="-1.1" y="-5" width="2.2" height="2.4" transform="rotate(0)" fill="#ced0d2"/><rect x="-1.1" y="-5" width="2.2" height="2.4" transform="rotate(45)" fill="#ced0d2"/><rect x="-1.1" y="-5" width="2.2" height="2.4" transform="rotate(90)" fill="#ced0d2"/><rect x="-1.1" y="-5" width="2.2" height="2.4" transform="rotate(135)" fill="#ced0d2"/><rect x="-1.1" y="-5" width="2.2" height="2.4" transform="rotate(180)" fill="#ced0d2"/><rect x="-1.1" y="-5" width="2.2" height="2.4" transform="rotate(225)" fill="#ced0d2"/><rect x="-1.1" y="-5" width="2.2" height="2.4" transform="rotate(270)" fill="#ced0d2"/><rect x="-1.1" y="-5" width="2.2" height="2.4" transform="rotate(315)" fill="#ced0d2"/><circle r="3.5" fill="#ced0d2"/><circle r="1.6" fill="#3c3f41"/></g></svg>
<svg style="left:958.8px;top:37px" width="10.6" height="11" viewBox="0 0 10.6 11" preserveAspectRatio="none"><defs><linearGradient id="lg2" x1="0" y1="0" x2="1" y2="0"><stop offset="0" stop-color="#d8e34a"/><stop offset=".35" stop-color="#35c58a"/><stop offset=".7" stop-color="#1ba5d8"/><stop offset="1" stop-color="#2d74e6"/></linearGradient></defs><path d="M1.8 1Q.6 5.5 1.8 10L9.8 5.5Z" fill="url(#lg2)" stroke="url(#lg2)" stroke-width="1.4" stroke-linejoin="round"/></svg>
<div class="abs" style="left:50px;top:13.4px;width:0.7px;height:525.4px;background:#434648;"></div>
<div class="abs" style="left:50px;top:51px;width:924px;height:1px;background:#323537;"></div>
<!-- ide_left -->
<div class="abs" style="left:50px;top:52px;width:14.3px;height:43.6px;background:#2d2f30;"></div>
<span class="t" style="left:58.60px;top:79.20px;font-size:8.6px;color:#d6d8da;transform-origin:0 0;transform:rotate(-90deg) scaleX(0.741) translateY(-50%);font-weight:bold;">Project</span>
<svg style="left:53.9px;top:82.6px" width="8" height="6.2" viewBox="0 0 8 6.2" preserveAspectRatio="none"><path d="M0 .8Q0 0 .8 0H3L4 1.1H7.2Q8 1.1 8 1.9V5.4Q8 6.2 7.2 6.2H.8Q0 6.2 0 5.4Z" fill="#c4c6c8"/></svg>
<div class="abs" style="left:64px;top:52px;width:0.8px;height:459px;background:#323537;"></div>
<span class="t" style="left:58.70px;top:439.20px;font-size:7.4px;color:#b4b6b8;transform-origin:0 0;transform:rotate(-90deg) scaleX(0.913) translateY(-50%);">Bookmarks</span>
<svg style="left:55.2px;top:442.5px" width="6" height="7.2" viewBox="0 0 6 7.2" preserveAspectRatio="none"><path d="M0 0H6V7.2L3 5L0 7.2Z" fill="#afb1b3"/></svg>
<span class="t" style="left:58.70px;top:491.90px;font-size:7.4px;color:#b4b6b8;transform-origin:0 0;transform:rotate(-90deg) scaleX(0.903) translateY(-50%);">Structure</span>
<svg style="left:54.2px;top:495.4px" width="7" height="7" viewBox="0 0 7 7" preserveAspectRatio="none"><rect x="3.8" y="0" width="3" height="3" fill="#afb1b3"/><rect x="0" y="3.9" width="3" height="3" fill="#afb1b3"/><rect x="3.8" y="3.9" width="3" height="3" fill="#afb1b3"/></svg>
<svg style="left:73.6px;top:57px" width="9.8" height="8.6" viewBox="0 0 9.8 8.6" preserveAspectRatio="none"><rect x=".4" y=".4" width="9" height="7.8" fill="#3e8fb8" stroke="#9aa7b0" stroke-width=".8"/><rect x=".4" y=".4" width="9" height="1.8" fill="#9aa7b0"/></svg>
<span class="t" style="left:86.40px;top:57.00px;font-size:8.9px;transform:scaleX(0.881);">Project</span>
<svg style="left:121.5px;top:60px" width="5.6" height="3.4" viewBox="0 0 5.6 3.4" preserveAspectRatio="none"><path d="M0 0H5.6L2.8 3.4Z" fill="#c4c6c8"/></svg>
<svg style="left:207.6px;top:56px" width="9.6" height="9.6" viewBox="0 0 9.6 9.6" preserveAspectRatio="none"><circle cx="4.8" cy="4.8" r="4" stroke="#c8cacc" stroke-width="1" fill="none"/><path d="M4.8 .3V3.2M4.8 6.4V9.3M.3 4.8H3.2M6.4 4.8H9.3" stroke="#c8cacc" stroke-width="1"/></svg>
<svg style="left:225.2px;top:56.2px" width="8.2" height="9.4" viewBox="0 0 8.2 9.4" preserveAspectRatio="none"><path d="M0 .5H8.2M0 8.9H8.2" stroke="#c8cacc" stroke-width="1"/><path d="M4.1 2L6 4.2H2.2ZM4.1 7.4L6 5.2H2.2Z" fill="#c8cacc"/></svg>
<svg style="left:242.7px;top:56.2px" width="8.6" height="9.4" viewBox="0 0 8.6 9.4" preserveAspectRatio="none"><path d="M0 4.7H8.6" stroke="#c8cacc" stroke-width="1"/><path d="M4.1 3.6L6 1.2H2.2ZM4.1 5.8L6 8.2H2.2Z" fill="#c8cacc"/><path d="M4.1 0V1.4M4.1 8V9.4" stroke="#c8cacc" stroke-width=".9"/></svg>
<div class="abs" style="left:257.3px;top:55px;width:0.8px;height:12px;background:#4b4e50;"></div>
<svg style="left:264.6px;top:56.2px" width="8.6" height="8.6" viewBox="0 0 10 10" preserveAspectRatio="none"><g transform="translate(5,5)"><rect x="-1.1" y="-5" width="2.2" height="2.4" transform="rotate(0)" fill="#c8cacc"/><rect x="-1.1" y="-5" width="2.2" height="2.4" transform="rotate(45)" fill="#c8cacc"/><rect x="-1.1" y="-5" width="2.2" height="2.4" transform="rotate(90)" fill="#c8cacc"/><rect x="-1.1" y="-5" width="2.2" height="2.4" transform="rotate(135)" fill="#c8cacc"/><rect x="-1.1" y="-5" width="2.2" height="2.4" transform="rotate(180)" fill="#c8cacc"/><rect x="-1.1" y="-5" width="2.2" height="2.4" transform="rotate(225)" fill="#c8cacc"/><rect x="-1.1" y="-5" width="2.2" height="2.4" transform="rotate(270)" fill="#c8cacc"/><rect x="-1.1" y="-5" width="2.2" height="2.4" transform="rotate(315)" fill="#c8cacc"/><circle r="3.5" fill="#c8cacc"/><circle r="1.6" fill="#3c3f41"/></g></svg>
<div class="abs" style="left:282.3px;top:60.1px;width:8.1px;height:1px;background:#c8cacc;"></div>
<div class="abs" style="left:64.8px;top:96.5px;width:230.7px;height:13.4px;background:#4a4638;"></div>
<div class="abs" style="left:64.8px;top:136.7px;width:230.7px;height:13.0px;background:#0d293e;"></div>
<svg style="left:69.4px;top:74.6px" width="5.6" height="3.4" viewBox="0 0 5.6 3.4" preserveAspectRatio="none"><path d="M.3 .3L2.8 2.9L5.3 .3" stroke="#aeb0b2" stroke-width=".9" fill="none"/></svg>
<svg style="left:82px;top:73px" width="9.4" height="7" viewBox="0 0 9.6 7.2" preserveAspectRatio="none"><path d="M0 .9Q0 0 .9 0H3.6L4.8 1.3H8.7Q9.6 1.3 9.6 2.2V6.4Q9.6 7.2 8.7 7.2H.9Q0 7.2 0 6.4Z" fill="#9aa7b0"/></svg>
<div class="abs" style="left:88px;top:78.3px;width:3.9px;height:3.9px;background:#3fbbd8;border:.6px solid #3c3f41"></div>
<span class="t" style="left:93.75px;top:73.00px;font-size:8.9px;color:#d0d2d4;font-weight:bold;transform:scaleX(0.895);"><span class="sq">untitled</span></span>
<span class="t" style="left:126.70px;top:73.00px;font-size:8.9px;color:#7d7f81;transform:scaleX(0.897);">C:\Users\Пользователь\IdeaProjects\untitled</span>
<svg style="left:83px;top:86.8px" width="3.4" height="5.6" viewBox="0 0 3.4 5.6" preserveAspectRatio="none"><path d="M.3 .3L2.9 2.8L.3 5.3" stroke="#aeb0b2" stroke-width=".9" fill="none"/></svg>
<svg style="left:93.3px;top:86.6px" width="9.6" height="7.2" viewBox="0 0 9.6 7.2" preserveAspectRatio="none"><path d="M0 .9Q0 0 .9 0H3.6L4.8 1.3H8.7Q9.6 1.3 9.6 2.2V6.4Q9.6 7.2 8.7 7.2H.9Q0 7.2 0 6.4Z" fill="#9aa7b0"/></svg>
<span class="t" style="left:105.60px;top:86.00px;font-size:8.9px;transform:scaleX(0.860);">.idea</span>
<svg style="left:83px;top:100.2px" width="3.4" height="5.6" viewBox="0 0 3.4 5.6" preserveAspectRatio="none"><path d="M.3 .3L2.9 2.8L.3 5.3" stroke="#aeb0b2" stroke-width=".9" fill="none"/></svg>
<svg style="left:93.3px;top:100px" width="9.6" height="7.2" viewBox="0 0 9.6 7.2" preserveAspectRatio="none"><path d="M0 .9Q0 0 .9 0H3.6L4.8 1.3H8.7Q9.6 1.3 9.6 2.2V6.4Q9.6 7.2 8.7 7.2H.9Q0 7.2 0 6.4Z" fill="#e07b31"/></svg>
<span class="t" style="left:105.60px;top:100.00px;font-size:8.9px;transform:scaleX(0.962);">out</span>
<svg style="left:82px;top:115px" width="5.6" height="3.4" viewBox="0 0 5.6 3.4" preserveAspectRatio="none"><path d="M.3 .3L2.8 2.9L5.3 .3" stroke="#aeb0b2" stroke-width=".9" fill="none"/></svg>
<svg style="left:93.3px;top:113.4px" width="9.6" height="7.2" viewBox="0 0 9.6 7.2" preserveAspectRatio="none"><path d="M0 .9Q0 0 .9 0H3.6L4.8 1.3H8.7Q9.6 1.3 9.6 2.2V6.4Q9.6 7.2 8.7 7.2H.9Q0 7.2 0 6.4Z" fill="#3e9cc9"/></svg>
<span class="t" style="left:105.60px;top:113.00px;font-size:8.9px;transform:scaleX(0.834);"><span class="sq">src</span></span>
<svg style="left:94px;top:128.4px" width="5.6" height="3.4" viewBox="0 0 5.6 3.4" preserveAspectRatio="none"><path d="M.3 .3L2.8 2.9L5.3 .3" stroke="#aeb0b2" stroke-width=".9" fill="none"/></svg>
<svg style="left:105.6px;top:126.4px" width="9.6" height="7.2" viewBox="0 0 9.6 7.2" preserveAspectRatio="none"><path d="M0 .9Q0 0 .9 0H3.6L4.8 1.3H8.7Q9.6 1.3 9.6 2.2V6.4Q9.6 7.2 8.7 7.2H.9Q0 7.2 0 6.4Z" fill="#9aa7b0"/><circle cx="4.8" cy="4.3" r="1.4" fill="#3c3f41"/></svg>
<span class="t" style="left:117.40px;top:127.00px;font-size:8.9px;transform:scaleX(0.852);"><span class="sq">java.rush.com</span></span>
<svg style="left:117.4px;top:138.8px" width="9.2" height="9.2" viewBox="0 0 9.2 9.2" preserveAspectRatio="none"><circle cx="4.6" cy="4.6" r="4.6" fill="#3e9cc9"/><path d="M6.1 3.3A2 2 0 1 0 6.1 5.8999999999999995" stroke="#27424f" stroke-width="1" fill="none"/></svg>
<span class="t" style="left:129.90px;top:140.00px;font-size:8.9px;color:#d0d2d4;transform:scaleX(0.905);"><span class="sq">Solution</span></span>
<svg style="left:95.2px;top:152.5px" width="8.4" height="9.2" viewBox="0 0 8.4 9.2" preserveAspectRatio="none"><path d="M2.2 0H7.6V6.4H5.6V8.6H.8V2.2Z" fill="#9aa7b0"/><path d="M2.2 0V2.2H.8Z" fill="#c9d0d4"/><rect x="4.8" y="5.8" width="3.4" height="3.4" fill="#2b2b2b"/></svg>
<span class="t" style="left:105.60px;top:153.00px;font-size:8.9px;transform:scaleX(0.929);">untitled.iml</span>
<svg style="left:70.6px;top:167.2px" width="3.4" height="5.6" viewBox="0 0 3.4 5.6" preserveAspectRatio="none"><path d="M.3 .3L2.9 2.8L.3 5.3" stroke="#aeb0b2" stroke-width=".9" fill="none"/></svg>
<svg style="left:81.3px;top:165.6px" width="9.8" height="8" viewBox="0 0 9.8 8" preserveAspectRatio="none"><rect x="0" y="1.4" width="1.4" height="6.6" fill="#62b543"/><rect x="2.2" y="0" width="1.4" height="8" fill="#9aa7b0"/><rect x="4.4" y="1.4" width="1.4" height="6.6" fill="#9aa7b0"/><rect x="6.6" y="0" width="1.4" height="8" fill="#9aa7b0"/><rect x="8.6" y="1.8" width="1.2" height="6.2" fill="#40b6e0"/></svg>
<span class="t" style="left:93.75px;top:167.00px;font-size:8.9px;transform:scaleX(0.863);">External Libraries</span>
<svg style="left:81.7px;top:178.4px" width="10.4" height="10.2" viewBox="0 0 10.4 10.2" preserveAspectRatio="none"><path d="M0 0H6.6V2L3.4 5.6H0Z" fill="#9aa7b0"/><path d="M1 1.4L2.4 2.6L1 3.8M3 3.8H4.8" stroke="#3c3f41" stroke-width=".7" fill="none"/><circle cx="6.6" cy="6.4" r="3.7" fill="#40b6e0"/><path d="M6.6 4.4V6.6H8.4" stroke="#243a44" stroke-width=".9" fill="none"/></svg>
<span class="t" style="left:93.75px;top:180.00px;font-size:8.9px;transform:scaleX(0.842);">Scratches and Consoles</span>
<div class="abs" style="left:295px;top:52px;width:0.8px;height:459px;background:#323537;"></div>
<!-- ide_editor -->
<div class="abs" style="left:295.8px;top:70px;width:664.4px;height:440.6px;background:#2b2b2b;"></div>
<div class="abs" style="left:295.8px;top:70px;width:33.2px;height:440.6px;background:#313335;"></div>
<div class="abs" style="left:328.9px;top:70px;width:1px;height:440.6px;background:#434547;"></div>
<div class="abs" style="left:329.9px;top:115.2px;width:630.3px;height:13px;background:#323232;"></div>
<div class="abs" style="left:375.6px;top:52px;width:491.8px;height:18px;background:#48463e;"></div>
<div class="abs" style="left:295.8px;top:52px;width:79.8px;height:18px;background:#4e5254;"></div>
<div class="abs" style="left:295.8px;top:67.6px;width:79.8px;height:2.4px;background:#4a88c7;"></div>
<svg style="left:301.5px;top:56.3px" width="9.0" height="9.0" viewBox="0 0 9.0 9.0" preserveAspectRatio="none"><circle cx="4.5" cy="4.5" r="4.5" fill="#3e9cc9"/><path d="M6.0 3.2A2 2 0 1 0 6.0 5.8" stroke="#27424f" stroke-width="1" fill="none"/></svg>
<span class="t" style="left:313.90px;top:57.00px;font-size:8.9px;color:#c2c4c6;transform:scaleX(0.889);"><span class="sq">Solution.java</span></span>
<svg style="left:365.0px;top:58.7px" width="4.6" height="4.6" viewBox="0 0 4.6 4.6" preserveAspectRatio="none"><path d="M0 0L4.6 4.6M4.6 0L0 4.6" stroke="#585b5e" stroke-width=".8"/></svg>
<svg style="left:380.8px;top:56.3px" width="9.0" height="9.0" viewBox="0 0 9.0 9.0" preserveAspectRatio="none"><circle cx="4.5" cy="4.5" r="4.5" fill="#3e9cc9"/><path d="M6.0 3.2A2 2 0 1 0 6.0 5.8" stroke="#27424f" stroke-width="1" fill="none"/></svg>
<span class="t" style="left:393.60px;top:57.00px;font-size:8.9px;color:#c2c4c6;transform:scaleX(0.871);">SecurityException.java</span>
<svg style="left:477.5px;top:58.7px" width="4.6" height="4.6" viewBox="0 0 4.6 4.6" preserveAspectRatio="none"><path d="M0 0L4.6 4.6M4.6 0L0 4.6" stroke="#585b5e" stroke-width=".8"/></svg>
<svg style="left:493.0px;top:56.3px" width="9.0" height="9.0" viewBox="0 0 9.0 9.0" preserveAspectRatio="none"><circle cx="4.5" cy="4.5" r="4.5" fill="#3e9cc9"/><path d="M6.0 3.2A2 2 0 1 0 6.0 5.8" stroke="#27424f" stroke-width="1" fill="none"/></svg>
<svg style="left:491.9px;top:56.0px" width="11.2" height="9.6" viewBox="0 0 11.2 9.6" preserveAspectRatio="none"><path d="M1.6 .6Q-.4 4.8 1.6 9M9.6 .6Q11.6 4.8 9.6 9" stroke="#9fd3ec" stroke-width=".9" fill="none"/></svg>
<span class="t" style="left:505.60px;top:57.00px;font-size:8.9px;color:#c2c4c6;transform:scaleX(0.847);">ClassLoader.java</span>
<svg style="left:569.4000000000001px;top:58.7px" width="4.6" height="4.6" viewBox="0 0 4.6 4.6" preserveAspectRatio="none"><path d="M0 0L4.6 4.6M4.6 0L0 4.6" stroke="#585b5e" stroke-width=".8"/></svg>
<svg style="left:584.6px;top:56.3px" width="9.0" height="9.0" viewBox="0 0 9.0 9.0" preserveAspectRatio="none"><circle cx="4.5" cy="4.5" r="4.5" fill="#3e9cc9"/><path d="M6.0 3.2A2 2 0 1 0 6.0 5.8" stroke="#27424f" stroke-width="1" fill="none"/></svg>
<span class="t" style="left:597.40px;top:57.00px;font-size:8.9px;color:#c2c4c6;transform:scaleX(0.846);">SecureClassLoader.java</span>
<svg style="left:684.7px;top:58.7px" width="4.6" height="4.6" viewBox="0 0 4.6 4.6" preserveAspectRatio="none"><path d="M0 0L4.6 4.6M4.6 0L0 4.6" stroke="#585b5e" stroke-width=".8"/></svg>
<svg style="left:700.0px;top:56.3px" width="9.0" height="9.0" viewBox="0 0 9.0 9.0" preserveAspectRatio="none"><circle cx="4.5" cy="4.5" r="4.5" fill="#3e9cc9"/><path d="M6.0 3.2A2 2 0 1 0 6.0 5.8" stroke="#27424f" stroke-width="1" fill="none"/></svg>
<svg style="left:699.1px;top:55.199999999999996px" width="4" height="4" viewBox="0 0 4 4" preserveAspectRatio="none"><circle cx="2" cy="2" r="1.7" fill="#cfe9f5"/></svg>
<span class="t" style="left:713.20px;top:57.00px;font-size:8.9px;color:#c2c4c6;transform:scaleX(0.806);">Class.java</span>
<svg style="left:751.7px;top:58.7px" width="4.6" height="4.6" viewBox="0 0 4.6 4.6" preserveAspectRatio="none"><path d="M0 0L4.6 4.6M4.6 0L0 4.6" stroke="#585b5e" stroke-width=".8"/></svg>
<svg style="left:767.3px;top:56.3px" width="9.0" height="9.0" viewBox="0 0 9.0 9.0" preserveAspectRatio="none"><circle cx="4.5" cy="4.5" r="4.5" fill="#3e9cc9"/><path d="M6.0 3.2A2 2 0 1 0 6.0 5.8" stroke="#27424f" stroke-width="1" fill="none"/></svg>
<svg style="left:766.4px;top:55.199999999999996px" width="4" height="4" viewBox="0 0 4 4" preserveAspectRatio="none"><circle cx="2" cy="2" r="1.7" fill="#cfe9f5"/></svg>
<span class="t" style="left:780.50px;top:57.00px;font-size:8.9px;color:#c2c4c6;transform:scaleX(0.867);">LauncherHelper.java</span>
<svg style="left:857.7px;top:58.7px" width="4.6" height="4.6" viewBox="0 0 4.6 4.6" preserveAspectRatio="none"><path d="M0 0L4.6 4.6M4.6 0L0 4.6" stroke="#585b5e" stroke-width=".8"/></svg>
<div class="abs" style="left:950.2px;top:57.6px;width:1.5px;height:1.5px;background:#c8cacc;border-radius:1px"></div>
<div class="abs" style="left:950.2px;top:60.6px;width:1.5px;height:1.5px;background:#c8cacc;border-radius:1px"></div>
<div class="abs" style="left:950.2px;top:63.6px;width:1.5px;height:1.5px;background:#c8cacc;border-radius:1px"></div>
<div class="abs" style="left:960.2px;top:52px;width:0.8px;height:459px;background:#323537;"></div>
<svg style="left:962.6px;top:59.2px" width="8.6" height="9" viewBox="0 0 8.6 9" preserveAspectRatio="none"><path d="M4 .6Q6.6 .6 6.6 3.6Q6.6 5.6 7.8 6.6H.2Q1.4 5.6 1.4 3.6Q1.4 .6 4 .6ZM3 7.3H5Q5 8.4 4 8.4Q3 8.4 3 7.3Z" fill="#afb1b3"/><circle cx="7" cy="1.4" r="1.5" fill="#e0516b"/></svg>
<span class="t" style="left:965.90px;top:70.60px;font-size:7.6px;color:#b4b6b8;transform-origin:0 0;transform:rotate(90deg) scaleX(0.920) translateY(-50%);">Notifications</span>
<svg style="left:962.2px;top:125.4px" width="7.6" height="7.6" viewBox="0 0 7.6 7.6" preserveAspectRatio="none"><circle cx="3.8" cy="3.8" r="3.3" stroke="#b4b6b8" stroke-width=".9" fill="none"/><path d="M.8 3.8H6.8M3.8 .8V6.8M1.6 1.8Q3.8 3 6 1.8M1.6 5.8Q3.8 4.6 6 5.8" stroke="#b4b6b8" stroke-width=".6" fill="none"/></svg>
<span class="t" style="left:965.90px;top:135.80px;font-size:7.6px;color:#b4b6b8;transform-origin:0 0;transform:rotate(90deg) scaleX(0.932) translateY(-50%);">Key Promoter X</span>
<svg style="left:895.7px;top:75.9px" width="6.2" height="6.2" viewBox="0 0 6.8 6.8" preserveAspectRatio="none"><circle cx="3.4" cy="3.4" r="3.3" fill="#802a28"/><rect x="2.9" y="1.4" width="1" height="2.6" fill="#5c1c1a"/><rect x="2.9" y="4.6" width="1" height="1" fill="#5c1c1a"/></svg>
<span class="t" style="left:905.40px;top:75.00px;font-size:8.6px;color:#8e9092;transform:scaleX(0.900);">1</span>
<svg style="left:914px;top:75px" width="7.6" height="7" viewBox="0 0 8 7.4" preserveAspectRatio="none"><path d="M4 .2L7.9 7.2H.1Z" fill="#a8862a"/><rect x="3.55" y="2.6" width=".9" height="2.4" fill="#4a3c14"/><rect x="3.55" y="5.5" width=".9" height=".9" fill="#4a3c14"/></svg>
<span class="t" style="left:925.60px;top:75.00px;font-size:8.6px;color:#8e9092;transform:scaleX(0.900);">1</span>
<svg style="left:935px;top:76.8px" width="5.6" height="3.2" viewBox="0 0 6.2 3.6" preserveAspectRatio="none"><path d="M.3 3.3L3.1 .5L5.9 3.3" stroke="#b8babc" stroke-width="1" fill="none"/></svg>
<svg style="left:949.2px;top:77px" width="5.6" height="3.2" viewBox="0 0 6.2 3.6" preserveAspectRatio="none"><path d="M.3 .3L3.1 3.1L5.9 .3" stroke="#b8babc" stroke-width="1" fill="none"/></svg>
<div class="abs" style="left:949.8px;top:116.6px;width:10.4px;height:1.1px;background:#d6a41f;"></div>
<div class="abs" style="left:949.8px;top:175.4px;width:10.4px;height:1.1px;background:#9e3b3a;"></div>
<span class="t" style="left:298.80px;top:73.00px;font-size:8.9px;color:#606366;transform:scaleX(0.950);">1</span>
<span class="t" style="left:298.80px;top:88.00px;font-size:8.9px;color:#606366;transform:scaleX(0.950);">2</span>
<span class="t" style="left:298.80px;top:103.00px;font-size:8.9px;color:#606366;transform:scaleX(0.950);">3</span>
<span class="t" style="left:298.80px;top:117.00px;font-size:8.9px;color:#a4a6a8;transform:scaleX(0.950);">4</span>
<span class="t" style="left:298.80px;top:132.00px;font-size:8.9px;color:#606366;transform:scaleX(0.950);">5</span>
<span class="t" style="left:298.80px;top:147.00px;font-size:8.9px;color:#606366;transform:scaleX(0.950);">6</span>
<span class="t" style="left:298.80px;top:161.00px;font-size:8.9px;color:#606366;transform:scaleX(0.950);">7</span>
<span class="t" style="left:298.80px;top:176.00px;font-size:8.9px;color:#606366;transform:scaleX(0.950);">8</span>
<span class="t m" style="left:333.75px;top:74.00px;font-size:8.76px;color:#a9b7c6;"><span style="color:#cc7832">package </span>java.rush.com<span style="color:#cc7832">;</span></span>
<span class="t m" style="left:333.75px;top:104.00px;font-size:8.76px;color:#a9b7c6;"><span style="color:#cc7832">public class </span><span style="color:#7c8084">Solution</span> {</span>
<span class="t m" style="left:354.77px;top:119.00px;font-size:8.76px;color:#a9b7c6;">p</span>
<div class="abs" style="left:360.2px;top:116.4px;width:1.3px;height:10.8px;background:#c6c8ca;"></div>
<span class="t m" style="left:333.75px;top:163.00px;font-size:8.76px;color:#a9b7c6;">}</span>
<div class="abs" style="left:333.2px;top:170.6px;width:4.4px;height:0.8px;background:#bc3f3c;"></div>
<!-- ide_popup -->
<div class="abs" style="left:335.8px;top:127.8px;width:300.99999999999994px;height:170.8px;background:#46484a;box-shadow:0 1px 3px rgba(0,0,0,.3)"></div>
<div class="abs" style="left:335.8px;top:128.4px;width:294.3999999999999px;height:13.2px;background:#565a5d;"></div>
<div class="abs" style="left:630px;top:127.8px;width:4.9px;height:135.2px;background:#626567;"></div>
<svg style="left:341.4px;top:131.2px" width="9.6" height="8.2" viewBox="0 0 9.6 7" preserveAspectRatio="none"><rect x="3.9" y="0" width="1.8" height="3.6" fill="#afb1b3"/><rect x="2.6" y="0" width="4.4" height="1" fill="#afb1b3"/><rect x=".6" y="3.4" width="8.4" height="1.5" fill="#afb1b3"/><rect x="0" y="5.8" width="9.6" height="1.1" fill="#afb1b3"/></svg>
<span class="t m" style="left:354.30px;top:133.00px;font-size:8.76px;color:#c4c6c8;"><span style="color:#589df6">p</span>svm</span>
<span class="t m" style="left:496.80px;top:133.00px;font-size:8.76px;color:#a0a2a4;">main() method declaration</span>
<span class="t m" style="left:354.30px;top:146.00px;font-size:8.76px;color:#c4c6c8;"><span style="color:#589df6">p</span>ublic</span>
<span class="t m" style="left:354.30px;top:159.00px;font-size:8.76px;color:#c4c6c8;"><span style="color:#589df6">p</span>rivate</span>
<span class="t m" style="left:354.30px;top:173.00px;font-size:8.76px;color:#c4c6c8;"><span style="color:#589df6">p</span>rotected</span>
<svg style="left:341.4px;top:184.72px" width="9.6" height="8.2" viewBox="0 0 9.6 7" preserveAspectRatio="none"><rect x="3.9" y="0" width="1.8" height="3.6" fill="#afb1b3"/><rect x="2.6" y="0" width="4.4" height="1" fill="#afb1b3"/><rect x=".6" y="3.4" width="8.4" height="1.5" fill="#afb1b3"/><rect x="0" y="5.8" width="9.6" height="1.1" fill="#afb1b3"/></svg>
<span class="t m" style="left:354.30px;top:186.00px;font-size:8.76px;color:#c4c6c8;"><span style="color:#589df6">p</span>rsf</span>
<span class="t m" style="left:523.08px;top:186.00px;font-size:8.76px;color:#8c8e90;">private static final</span>
<svg style="left:341.5px;top:198.4px" width="9.2" height="9.2" viewBox="0 0 9.2 9.2" preserveAspectRatio="none"><circle cx="4.6" cy="4.6" r="4.6" fill="#c86a7c"/><path d="M2.6 6.6V3.6M2.6 4.4Q3.6 3.2 4.6 4.4V6.6M4.6 4.4Q5.6 3.2 6.6 4.4V6.6" stroke="#45222b" stroke-width=".8" fill="none"/></svg>
<span class="t m" style="left:354.30px;top:200.00px;font-size:8.76px;color:#c4c6c8;"><span style="color:#589df6">p</span>rotected Object clone<span style="color:#8c8e90">() {...}</span></span>
<span class="t m" style="left:596.66px;top:200.00px;font-size:8.76px;color:#8c8e90;">Object</span>
<svg style="left:341.5px;top:211.78px" width="9.2" height="9.2" viewBox="0 0 9.2 9.2" preserveAspectRatio="none"><circle cx="4.6" cy="4.6" r="4.6" fill="#c86a7c"/><path d="M2.6 6.6V3.6M2.6 4.4Q3.6 3.2 4.6 4.4V6.6M4.6 4.4Q5.6 3.2 6.6 4.4V6.6" stroke="#45222b" stroke-width=".8" fill="none"/></svg>
<span class="t m" style="left:354.30px;top:213.00px;font-size:8.76px;color:#c4c6c8;"><span style="color:#589df6">p</span>ublic boolean equals<span style="color:#8c8e90">(Object obj) {...}</span></span>
<span class="t m" style="left:596.66px;top:213.00px;font-size:8.76px;color:#8c8e90;">Object</span>
<svg style="left:341.5px;top:225.16000000000003px" width="9.2" height="9.2" viewBox="0 0 9.2 9.2" preserveAspectRatio="none"><circle cx="4.6" cy="4.6" r="4.6" fill="#c86a7c"/><path d="M2.6 6.6V3.6M2.6 4.4Q3.6 3.2 4.6 4.4V6.6M4.6 4.4Q5.6 3.2 6.6 4.4V6.6" stroke="#45222b" stroke-width=".8" fill="none"/></svg>
<span class="t m" style="left:354.30px;top:226.00px;font-size:8.76px;color:#c4c6c8;"><span style="color:#589df6">p</span>ublic int hashCode<span style="color:#8c8e90">() {...}</span></span>
<span class="t m" style="left:596.66px;top:226.00px;font-size:8.76px;color:#8c8e90;">Object</span>
<svg style="left:341.5px;top:238.54000000000002px" width="9.2" height="9.2" viewBox="0 0 9.2 9.2" preserveAspectRatio="none"><circle cx="4.6" cy="4.6" r="4.6" fill="#c86a7c"/><path d="M2.6 6.6V3.6M2.6 4.4Q3.6 3.2 4.6 4.4V6.6M4.6 4.4Q5.6 3.2 6.6 4.4V6.6" stroke="#45222b" stroke-width=".8" fill="none"/></svg>
<span class="t m" style="left:354.30px;top:240.00px;font-size:8.76px;color:#c4c6c8;"><span style="color:#589df6">p</span>ublic String toString<span style="color:#8c8e90">() {...}</span></span>
<span class="t m" style="left:596.66px;top:240.00px;font-size:8.76px;color:#8c8e90;">Object</span>
<svg style="left:341.5px;top:251.92px" width="9.2" height="9.2" viewBox="0 0 9.2 9.2" preserveAspectRatio="none"><circle cx="4.6" cy="4.6" r="4.6" fill="#c86a7c"/><path d="M2.6 6.6V3.6M2.6 4.4Q3.6 3.2 4.6 4.4V6.6M4.6 4.4Q5.6 3.2 6.6 4.4V6.6" stroke="#45222b" stroke-width=".8" fill="none"/></svg>
<span class="t m" style="left:354.30px;top:253.00px;font-size:8.76px;color:#c4c6c8;"><span style="text-decoration:line-through;text-decoration-thickness:.6px;text-decoration-color:rgba(200,200,200,.8)"><span style="color:#589df6">p</span>rotected void finalize<span style="color:#8c8e90">() {...}</span></span></span>
<span class="t m" style="left:596.66px;top:253.00px;font-size:8.76px;color:#8c8e90;">Object</span>
<svg style="left:341.4px;top:265.0px" width="9.6" height="8.2" viewBox="0 0 9.6 7" preserveAspectRatio="none"><rect x="3.9" y="0" width="1.8" height="3.6" fill="#afb1b3"/><rect x="2.6" y="0" width="4.4" height="1" fill="#afb1b3"/><rect x=".6" y="3.4" width="8.4" height="1.5" fill="#afb1b3"/><rect x="0" y="5.8" width="9.6" height="1.1" fill="#afb1b3"/></svg>
<span class="t m" style="left:354.30px;top:266.00px;font-size:8.76px;color:#c4c6c8;"><span style="color:#589df6">p</span>sf</span>
<span class="t m" style="left:528.34px;top:266.00px;font-size:8.76px;color:#8c8e90;">public static final</span>
<div class="abs" style="left:0;top:0;width:1024px;height:282.6px;overflow:hidden"><svg style="left:341.4px;top:278.38px" width="9.6" height="8.2" viewBox="0 0 9.6 7" preserveAspectRatio="none"><rect x="3.9" y="0" width="1.8" height="3.6" fill="#afb1b3"/><rect x="2.6" y="0" width="4.4" height="1" fill="#afb1b3"/><rect x=".6" y="3.4" width="8.4" height="1.5" fill="#afb1b3"/><rect x="0" y="5.8" width="9.6" height="1.1" fill="#afb1b3"/></svg>
<span class="t m" style="left:354.30px;top:280.00px;font-size:8.76px;color:#c4c6c8;"><span style="color:#589df6">p</span>sfi</span>
<span class="t m" style="left:507.31px;top:280.00px;font-size:8.76px;color:#8c8e90;">public static final int</span>
</div>
<span class="t" style="left:343.80px;top:287.00px;font-size:7.2px;color:#8a8c8e;transform:scaleX(0.871);">Press Ctrl+. to choose the selected (or first) suggestion and insert a dot afterwards</span>
<span class="t" style="left:575.90px;top:287.00px;font-size:7.2px;color:#589df6;transform:scaleX(0.871);">Next Tip</span>
<svg style="left:612.8px;top:285px" width="6.8" height="9.8" viewBox="0 0 6.8 9.8" preserveAspectRatio="none"><path d="M3.4 0A3.4 3.4 0 0 1 5.4 6.2V7.4H1.4V6.2A3.4 3.4 0 0 1 3.4 0Z" fill="#f0a732"/><rect x="1.6" y="8" width="3.6" height="1.5" fill="#b8a0c8"/></svg>
<div class="abs" style="left:628.3px;top:286.2px;width:1.8px;height:1.8px;background:#d0d2d4;"></div>
<div class="abs" style="left:628.3px;top:289.2px;width:1.8px;height:1.8px;background:#d0d2d4;"></div>
<div class="abs" style="left:628.3px;top:292.2px;width:1.8px;height:1.8px;background:#d0d2d4;"></div>
<!-- ide_bottom -->
<div class="abs" style="left:50px;top:510.6px;width:924px;height:0.9px;background:#323537;"></div>
<div class="abs" style="left:50px;top:525.2px;width:924px;height:0.8px;background:#37393b;"></div>
<svg style="left:73.6px;top:515.4px" width="6" height="7.4" viewBox="0 0 6 7.4" preserveAspectRatio="none"><circle cx="1.2" cy="1.2" r="1.1" fill="#afb1b3"/><circle cx="1.2" cy="6.2" r="1.1" fill="#afb1b3"/><circle cx="4.8" cy="1.8" r="1.1" fill="#afb1b3"/><path d="M1.2 1.2V6.2M4.8 1.8Q4.8 4.2 1.2 4.6" stroke="#afb1b3" stroke-width=".9" fill="none"/></svg>
<span class="t" style="left:83.40px;top:516.00px;font-size:7.5px;color:#b6b8ba;transform:scaleX(0.956);">Version Control</span>
<svg style="left:148px;top:515.8px" width="5.6" height="6.4" viewBox="0 0 5.6 6.4" preserveAspectRatio="none"><path d="M0 0L5.6 3.2L0 6.4Z" fill="#afb1b3"/></svg>
<span class="t" style="left:158.60px;top:516.00px;font-size:7.5px;color:#b6b8ba;transform:scaleX(0.872);">Run</span>
<svg style="left:182.8px;top:516px" width="7.4" height="5.6" viewBox="0 0 7.4 5.6" preserveAspectRatio="none"><path d="M0 .6H1.6M2.6 .6H7.4M0 2.8H1.6M2.6 2.8H7.4M0 5H1.6M2.6 5H7.4" stroke="#afb1b3" stroke-width="1.1"/></svg>
<span class="t" style="left:194.00px;top:516.00px;font-size:7.5px;color:#b6b8ba;transform:scaleX(0.855);">TODO</span>
<svg style="left:226.6px;top:514.9px" width="7.2" height="7.2" viewBox="0 0 7.2 7.2" preserveAspectRatio="none"><circle cx="3.6" cy="3.6" r="3.6" fill="#e05555"/><rect x="3.1" y="1.5" width="1" height="2.8" fill="#5a2020"/><rect x="3.1" y="4.9" width="1" height="1" fill="#5a2020"/></svg>
<span class="t" style="left:237.80px;top:516.00px;font-size:7.5px;color:#b6b8ba;transform:scaleX(0.906);">Problems</span>
<svg style="left:281px;top:515px" width="8" height="7" viewBox="0 0 8 7" preserveAspectRatio="none"><rect width="8" height="7" rx=".6" fill="#afb1b3"/><path d="M1.4 1.6L3.2 3.2L1.4 4.8M3.8 5.2H6.4" stroke="#3c3f41" stroke-width=".8" fill="none"/></svg>
<span class="t" style="left:292.80px;top:516.00px;font-size:7.5px;color:#b6b8ba;transform:scaleX(0.924);">Terminal</span>
<svg style="left:332.2px;top:515.3px" width="8.4" height="8.2" viewBox="0 0 8.4 8.2" preserveAspectRatio="none"><path d="M2.5 0H5.9L8.4 2.4V5.8L5.9 8.2H2.5L0 5.8V2.4Z" fill="#afb1b3"/><path d="M3.2 2.3L6.2 4.1L3.2 5.9Z" fill="#3c3f41"/></svg>
<span class="t" style="left:343.80px;top:516.00px;font-size:7.5px;color:#b6b8ba;transform:scaleX(0.845);">Services</span>
<svg style="left:381.4px;top:514.8px" width="8.8" height="8.2" viewBox="0 0 8.8 8.2" preserveAspectRatio="none"><path d="M.3 2.8L3 .2L4.2 1.4L3.4 2.2L8.6 6.8L7.4 8L2.4 3.2L1.6 4Z" fill="#afb1b3"/></svg>
<span class="t" style="left:393.10px;top:516.00px;font-size:7.5px;color:#b6b8ba;transform:scaleX(0.899);">Build</span>
<svg style="left:55px;top:528.4px" width="8.4" height="7.8" viewBox="0 0 8.4 7.8" preserveAspectRatio="none"><rect x="1.8" y=".4" width="6.2" height="5.4" rx=".8" stroke="#9fa1a3" stroke-width=".8" fill="none"/><path d="M1.8 2V6.6Q1.8 7.4 2.6 7.4H7" stroke="#9fa1a3" stroke-width=".8" fill="none" transform="translate(-1.4,0)"/></svg>
<span class="t" style="left:68.40px;top:529.00px;font-size:8.6px;color:#b8babc;transform:scaleX(0.909);">Build completed successfully in 4 sec, 469 ms (13 minutes ago)</span>
<span class="t" style="left:847.80px;top:529.00px;font-size:8.4px;color:#a4a6a8;transform:scaleX(0.873);">4:6</span>
<span class="t" style="left:865.80px;top:529.00px;font-size:8.4px;color:#a4a6a8;transform:scaleX(0.784);">CRLF</span>
<span class="t" style="left:891.60px;top:529.00px;font-size:8.4px;color:#a4a6a8;transform:scaleX(0.870);">UTF-8</span>
<span class="t" style="left:920.00px;top:529.00px;font-size:8.4px;color:#a4a6a8;transform:scaleX(0.886);">4 spaces</span>
<svg style="left:957.2px;top:528.8px" width="7.8" height="7" viewBox="0 0 7.8 7" preserveAspectRatio="none"><rect x="2.6" y="3.2" width="5.2" height="3.8" fill="#b4b6b8"/><path d="M.6 3.4V2.2Q.6 .5 2.1 .5Q3.6 .5 3.6 2.2V3.4" stroke="#b4b6b8" stroke-width=".9" fill="none"/></svg>
</div>
</body>
</html>
